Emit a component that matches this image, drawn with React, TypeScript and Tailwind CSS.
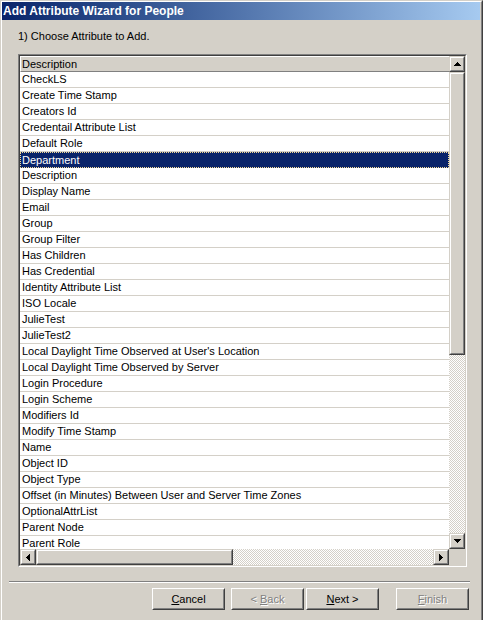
import React from "react";

const items = [
  "CheckLS",
  "Create Time Stamp",
  "Creators Id",
  "Credentail Attribute List",
  "Default Role",
  "Department",
  "Description",
  "Display Name",
  "Email",
  "Group",
  "Group Filter",
  "Has Children",
  "Has Credential",
  "Identity Attribute List",
  "ISO Locale",
  "JulieTest",
  "JulieTest2",
  "Local Daylight Time Observed at User's Location",
  "Local Daylight Time Observed by Server",
  "Login Procedure",
  "Login Scheme",
  "Modifiers Id",
  "Modify Time Stamp",
  "Name",
  "Object ID",
  "Object Type",
  "Offset (in Minutes) Between User and Server Time Zones",
  "OptionalAttrList",
  "Parent Node",
  "Parent Role",
];

function Raised({ className, children }: { className: string; children?: React.ReactNode }) {
  return (
    <div className={"shrink-0 border border-t-[#d4d0c8] border-l-[#d4d0c8] border-b-[#404040] border-r-[#404040] " + className}>
      <div className="w-full h-full border border-t-white border-l-white border-b-[#808080] border-r-[#808080] bg-[#d4d0c8] flex items-center justify-center">
        {children}
      </div>
    </div>
  );
}

const Up = () => (
  <svg width="7" height="4" viewBox="0 0 7 4" className="block">
    <path d="M3 0h1v1H3zM2 1h3v1H2zM1 2h5v1H1zM0 3h7v1H0z" fill="#000" />
  </svg>
);
const Down = () => (
  <svg width="7" height="4" viewBox="0 0 7 4" className="block">
    <path d="M0 0h7v1H0zM1 1h5v1H1zM2 2h3v1H2zM3 3h1v1H3z" fill="#000" />
  </svg>
);
const Left = () => (
  <svg width="4" height="7" viewBox="0 0 4 7" className="block">
    <path d="M0 3h1v1H0zM1 2h1v3H1zM2 1h1v5H2zM3 0h1v7H3z" fill="#000" />
  </svg>
);
const Right = () => (
  <svg width="4" height="7" viewBox="0 0 4 7" className="block">
    <path d="M0 0h1v7H0zM1 1h1v5H1zM2 2h1v3H2zM3 3h1v1H3z" fill="#000" />
  </svg>
);

function PushButton({ className, children }: { className: string; children: React.ReactNode }) {
  return (
    <div className={"h-[22px] w-[73px] shrink-0 border border-t-white border-l-white border-b-[#404040] border-r-[#404040] " + className}>
      <div className="h-full border border-t-[#d4d0c8] border-l-[#d4d0c8] border-b-[#808080] border-r-[#808080] flex items-center justify-center leading-[13px]">
        {children}
      </div>
    </div>
  );
}

const checker =
  "bg-[#d4d0c8] bg-[image:repeating-conic-gradient(#ffffff_0%_25%,#d4d0c8_0%_50%)] bg-[length:2px_2px]";

export default function App() {
  return (
    <div className="w-[483px] h-[620px] overflow-hidden bg-[#d4d0c8] font-['Liberation_Sans',Arial,sans-serif] text-[11px] text-black">
      <div className="h-full border-t border-l border-r border-t-[#d4d0c8] border-l-[#d4d0c8] border-r-[#404040]">
        <div className="h-full border-t border-l border-r border-t-white border-l-white border-r-[#808080] pr-px flex flex-col">
          <div className="h-[18px] shrink-0 bg-linear-to-r from-[#0a246a] to-[#a6caf0] flex items-center pl-px text-white font-bold text-[12px] whitespace-nowrap">
            Add Attribute Wizard for People
          </div>
          <div className="mt-[10px] ml-[16px] leading-[13px]">1) Choose Attribute to Add.</div>

          <div className="mt-[11px] ml-[16px] w-[449px] h-[513px] shrink-0 border border-t-[#808080] border-l-[#808080] border-b-white border-r-white">
            <div className="h-full border border-t-[#404040] border-l-[#404040] border-b-[#d4d0c8] border-r-[#d4d0c8] bg-white flex flex-col">
              <div className="flex flex-1 min-h-0">
                <div className="flex-1 min-w-0 flex flex-col overflow-hidden">
                  <div className="h-[16px] shrink-0 bg-[#d4d0c8] border-t border-l border-b border-t-white border-l-white border-b-[#808080] leading-[14px] pl-px">
                    Description
                  </div>
                  {items.map((it) =>
                    it === "Department" ? (
                      <div
                        key={it}
                        className="h-[16px] shrink-0 bg-[#0a246a] text-white border border-dotted border-[#f5db95] pl-px leading-[14px] whitespace-nowrap"
                      >
                        {it}
                      </div>
                    ) : (
                      <div key={it} className="h-[16px] shrink-0 border-b border-b-[#d4d0c8] pl-[2px] leading-[15px] whitespace-nowrap">
                        {it}
                      </div>
                    )
                  )}
                </div>
                <div className="w-[16px] shrink-0 flex flex-col">
                  <Raised className="w-[16px] h-[16px]">
                    <Up />
                  </Raised>
                  <Raised className="w-[16px] h-[283px]" />
                  <div className={"flex-1 " + checker} />
                  <Raised className="w-[16px] h-[16px]">
                    <Down />
                  </Raised>
                </div>
              </div>
              <div className="h-[16px] shrink-0 flex">
                <Raised className="w-[16px] h-[16px]">
                  <Left />
                </Raised>
                <Raised className="w-[197px] h-[16px]" />
                <div className={"flex-1 " + checker} />
                <Raised className="w-[16px] h-[16px]">
                  <Right />
                </Raised>
                <div className="w-[16px] shrink-0 bg-[#d4d0c8]" />
              </div>
            </div>
          </div>

          <div className="mt-[14px] ml-[7px] w-[461px] h-[2px] shrink-0 border-t border-t-[#808080] border-b border-b-white" />

          <div className="mt-[5px] flex">
            <PushButton className="ml-[150px]">
              <span>
                <u>C</u>ancel
              </span>
            </PushButton>
            <PushButton className="ml-[6px]">
              <span className="text-[#808080] [text-shadow:1px_1px_0_#ffffff]">
                &lt; <u>B</u>ack
              </span>
            </PushButton>
            <PushButton className="ml-[2px]">
              <span>
                <u>N</u>ext &gt;
              </span>
            </PushButton>
            <PushButton className="ml-[17px]">
              <span className="text-[#808080] [text-shadow:1px_1px_0_#ffffff]">
                <u>F</u>inish
              </span>
            </PushButton>
          </div>
        </div>
      </div>
    </div>
  );
}
